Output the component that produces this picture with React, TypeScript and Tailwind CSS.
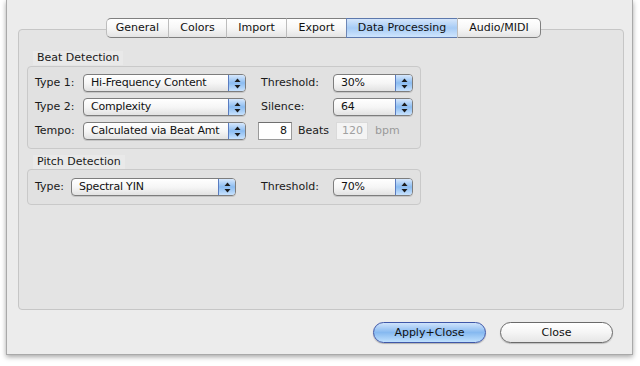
import type { ReactNode } from "react";

const tabs = [
  { name: "General", w: "w-[62px]" },
  { name: "Colors", w: "w-[58px]" },
  { name: "Import", w: "w-[60px]" },
  { name: "Export", w: "w-[60px]" },
  { name: "Data Processing", w: "w-[111px]", active: true },
  { name: "Audio/MIDI", w: "w-[84px]" },
];

const Arrows = () => (
  <svg width="7" height="11" viewBox="0 0 7 11">
    <path d="M3.5 0.5 L6.5 4 L0.5 4 Z" fill="#1c1c1c" />
    <path d="M3.5 10.5 L6.5 7 L0.5 7 Z" fill="#1c1c1c" />
  </svg>
);

const Popup = ({ value, width }: { value: string; width: string }) => (
  <div
    className={`${width} h-[18px] flex rounded-[4px] border border-[#7d7d7d] overflow-hidden bg-gradient-to-b from-white via-[#f6f6f6] to-[#e2e2e2] shadow-[0_1px_0_rgba(0,0,0,0.12)]`}
  >
    <div className="flex-1 pl-[7px] leading-[16px] text-[#111] whitespace-nowrap tracking-[-0.2px]">{value}</div>
    <div className="w-[17px] flex items-center justify-center border-l border-[#5a7cc0] bg-gradient-to-b from-[#d7e8fc] via-[#8bbcf1] to-[#c8e2fd]">
      <Arrows />
    </div>
  </div>
);

const Label = ({ children, width }: { children: ReactNode; width: string }) => (
  <div className={`${width} leading-[18px] text-[#1a1a1a] whitespace-nowrap`}>{children}</div>
);

const GroupTitle = ({ children }: { children: ReactNode }) => (
  <div className="ml-[6px] w-fit h-[14px] bg-[#e9e9e9] px-[4px] leading-[14px] text-[#1a1a1a] whitespace-nowrap">
    {children}
  </div>
);

export default function App() {
  return (
    <div
      className="w-[640px] h-[366px] bg-white overflow-hidden text-[11px]"
      style={{ fontFamily: '"DejaVu Sans", Verdana, sans-serif' }}
    >
      <div className="ml-[6px] w-[627px] h-[355px] flex flex-col bg-[#ececec] border-x border-b border-[#a9a9a9] shadow-[0_2px_5px_rgba(0,0,0,0.35)]">
        {/* Tabs */}
        <div className="relative z-10 mt-[18px] ml-[99px] flex h-[20px]">
          {tabs.map((t, i) => (
            <div
              key={t.name}
              className={`${t.w} h-[20px] flex items-center justify-center border-y border-[#7f7f7f] ${
                i === 0 ? "border-l rounded-l-[5px]" : "border-l"
              } ${i === tabs.length - 1 ? "border-r rounded-r-[5px]" : ""} ${
                t.active
                  ? "bg-gradient-to-b from-[#d5e6fb] via-[#a6cbf5] to-[#cfe5fd] border-l-[#6d86b5] border-y-[#5d78ac]"
                  : "bg-gradient-to-b from-white via-[#f7f7f7] to-[#e4e4e4] border-l-[#bdbdbd]"
              } text-[#111] whitespace-nowrap`}
            >
              {t.name}
            </div>
          ))}
        </div>

        {/* Tab panel */}
        <div className="-mt-[9px] ml-[11px] w-[606px] h-[281px] rounded-[4px] border border-[#c6c6c6] bg-[#e4e4e4] pt-[21px] pl-[8px]">
          <GroupTitle>Beat Detection</GroupTitle>
          <div className="mt-[1px] w-[394px] h-[83px] rounded-[4px] border border-[#c9c9c9] bg-[#e1e1e1] pt-[7px] pl-[7px] flex flex-col gap-[6px]">
            <div className="flex items-center">
              <Label width="w-[48px]">Type 1:</Label>
              <Popup value="Hi-Frequency Content" width="w-[163px]" />
              <div className="ml-[15px]">
                <Label width="w-[72px]">Threshold:</Label>
              </div>
              <Popup value="30%" width="w-[80px]" />
            </div>
            <div className="flex items-center">
              <Label width="w-[48px]">Type 2:</Label>
              <Popup value="Complexity" width="w-[163px]" />
              <div className="ml-[15px]">
                <Label width="w-[72px]">Silence:</Label>
              </div>
              <Popup value="64" width="w-[80px]" />
            </div>
            <div className="flex items-center">
              <Label width="w-[48px]">Tempo:</Label>
              <Popup value="Calculated via Beat Amt" width="w-[163px]" />
              <div className="ml-[12px] w-[34px] h-[18px] bg-white border border-[#9a9a9a] border-t-[#6f6f6f] text-right pr-[4px] leading-[16px] text-[#111]">
                8
              </div>
              <div className="ml-[6px] w-[38px] text-[#1a1a1a]">Beats</div>
              <div className="w-[32px] h-[18px] bg-[#f4f4f4] border border-[#dadada] text-right pr-[4px] leading-[16px] text-[#a0a0a0]">
                120
              </div>
              <div className="ml-[7px] text-[#9a9a9a]">bpm</div>
            </div>
          </div>

          <div className="mt-[6px]">
            <GroupTitle>Pitch Detection</GroupTitle>
          </div>
          <div className="w-[394px] h-[36px] rounded-[4px] border border-[#c9c9c9] bg-[#e1e1e1] pt-[8px] pl-[7px]">
            <div className="flex items-center">
              <Label width="w-[36px]">Type:</Label>
              <Popup value="Spectral YIN" width="w-[165px]" />
              <div className="ml-[25px]">
                <Label width="w-[72px]">Threshold:</Label>
              </div>
              <Popup value="70%" width="w-[80px]" />
            </div>
          </div>
        </div>

        {/* Buttons */}
        <div className="mt-[12px] flex justify-end gap-[14px] pr-[19px]">
          <button className="w-[113px] h-[21px] rounded-full border border-[#3f57a8] bg-gradient-to-b from-[#cfe3fb] via-[#86b9f0] to-[#bfe0fd] text-[#111] leading-[19px] shadow-[0_1px_1px_rgba(0,0,0,0.25)]">
            Apply+Close
          </button>
          <button className="w-[113px] h-[21px] rounded-full border border-[#6a6a6a] bg-gradient-to-b from-white via-[#f5f5f5] to-[#e6e6e6] text-[#111] leading-[19px] shadow-[0_1px_1px_rgba(0,0,0,0.2)]">
            Close
          </button>
        </div>
      </div>
    </div>
  );
}
